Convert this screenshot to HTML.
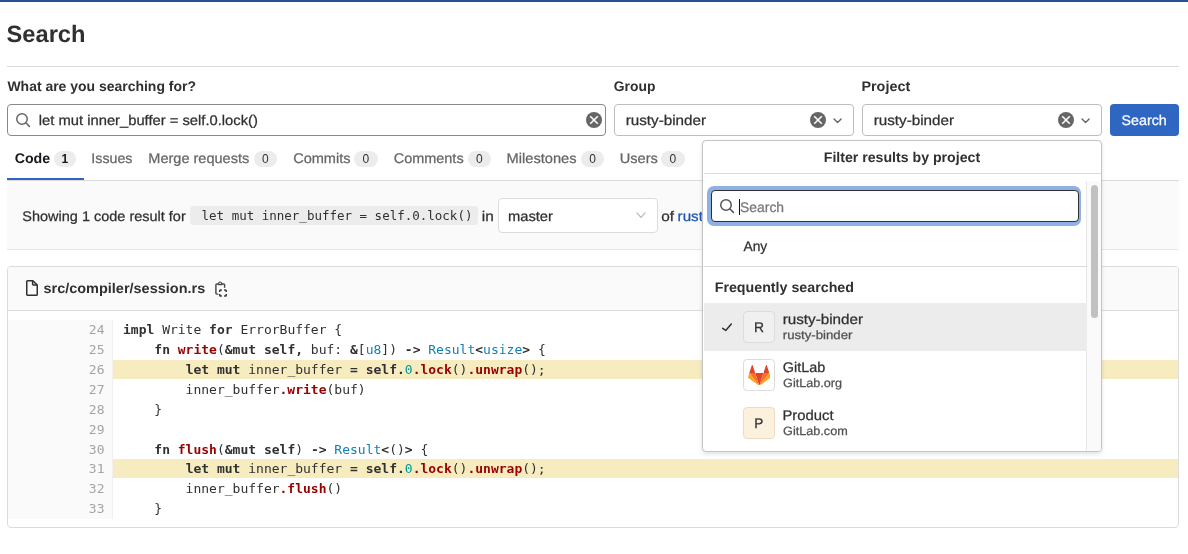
<!DOCTYPE html>
<html lang="en"><head><meta charset="utf-8"><title>Search</title>
<style>
*{box-sizing:border-box;margin:0;padding:0}
html,body{width:1188px;height:554px;overflow:hidden;background:#fff;font-family:'Liberation Sans', sans-serif;color:#303030}
.abs{position:absolute}
.t{position:absolute;white-space:pre;line-height:1em;transform-origin:0 50%;display:block;-webkit-text-stroke:0.25px currentColor;text-rendering:geometricPrecision}
.badge{position:absolute;top:151px;height:16px;border-radius:8px;background:#ececec;color:#303030;font-size:12px;line-height:16px;text-align:center}
.box{position:absolute;border-radius:4px;border:1px solid #bdbdbd;background:#fff}
.ln{position:absolute;left:8px;width:96.5px;text-align:right;font:13px/19.86px 'DejaVu Sans Mono', 'Liberation Mono', monospace;color:#a4a4a4;height:19.86px}
.cl{position:absolute;left:123px;font:13px/19.86px 'DejaVu Sans Mono', 'Liberation Mono', monospace;color:#303030;height:19.86px;white-space:pre}
.hll{position:absolute;left:113px;width:1065px;height:18.7px;background:#f6ecc0}
.k{font-weight:700}
.nf{font-weight:700;color:#900}
.nb{color:#1280b3}
.mi{color:#099}
.row{position:absolute;left:704px;width:382.5px;height:48px}
.av{position:absolute;left:743px;width:32px;height:32px;border-radius:4px;border:1px solid #dcdcde}
#root{position:absolute;left:0;top:0;width:1188px;height:554px;will-change:transform;background:#fff}
</style></head><body><div id="root">
<div class="abs" style="left:0;top:0;width:1188px;height:2px;background:#285294"></div>
<div class="abs" style="left:7px;top:66px;width:1172px;height:1px;background:#dbdbdb"></div>

<!-- search input -->
<div class="box" style="left:7px;top:104px;width:599px;height:32px;border-color:#89888d"></div>
<svg class="abs" style="left:15px;top:112px" width="16" height="16" viewBox="0 0 16 16"><circle cx="7" cy="7" r="5.25" stroke="#666" stroke-width="1.5" fill="none"/><path d="M10.8 10.8L14.4 14.4" stroke="#666" stroke-width="1.5" stroke-linecap="round"/></svg>
<svg class="abs" style="left:586px;top:112px" width="16" height="16" viewBox="0 0 16 16"><circle cx="8" cy="8" r="8" fill="#666"/><path d="M4.2 4.2l7.6 7.6M11.8 4.2l-7.6 7.6" stroke="#fff" stroke-width="1.5" stroke-linecap="butt" fill="none"/></svg>
<!-- group -->
<div class="box" style="left:614px;top:104px;width:240px;height:32px"></div>
<svg class="abs" style="left:810px;top:112px" width="16" height="16" viewBox="0 0 16 16"><circle cx="8" cy="8" r="8" fill="#666"/><path d="M4.2 4.2l7.6 7.6M11.8 4.2l-7.6 7.6" stroke="#fff" stroke-width="1.5" stroke-linecap="butt" fill="none"/></svg>
<svg class="abs" style="left:833.3px;top:118.0px" width="9.1" height="5.6" viewBox="-1 -1 9.1 5.6"><path d="M0 0L3.55 3.6L7.1 0" stroke="#666" stroke-width="1.4" stroke-linecap="round" stroke-linejoin="round" fill="none"/></svg>
<!-- project -->
<div class="box" style="left:862px;top:104px;width:240px;height:32px"></div>
<svg class="abs" style="left:1058px;top:112px" width="16" height="16" viewBox="0 0 16 16"><circle cx="8" cy="8" r="8" fill="#666"/><path d="M4.2 4.2l7.6 7.6M11.8 4.2l-7.6 7.6" stroke="#fff" stroke-width="1.5" stroke-linecap="butt" fill="none"/></svg>
<svg class="abs" style="left:1080.95px;top:118.0px" width="9.1" height="5.6" viewBox="-1 -1 9.1 5.6"><path d="M0 0L3.55 3.6L7.1 0" stroke="#666" stroke-width="1.4" stroke-linecap="round" stroke-linejoin="round" fill="none"/></svg>
<!-- button -->
<div class="abs" style="left:1110px;top:104px;width:69px;height:32px;border-radius:4px;background:#2f66c2"></div>

<!-- tabs -->
<div class="abs" style="left:7px;top:180px;width:1172px;height:1px;background:#dbdbdb"></div>
<div class="abs" style="left:7px;top:178px;width:76.5px;height:2px;background:#2f66c2"></div>
<span class="badge" style="left:54px;width:21.5px;font-weight:700;color:#18171d;">1</span><span class="badge" style="left:254.25px;width:22.25px;">0</span><span class="badge" style="left:354px;width:23.5px;">0</span><span class="badge" style="left:468px;width:22.75px;">0</span><span class="badge" style="left:581.3px;width:22.5px;">0</span><span class="badge" style="left:661.3px;width:23.300000000000068px;">0</span>

<!-- results header -->
<div class="abs" style="left:7px;top:181px;width:1172px;height:69px;background:#fafafa;border-bottom:1px solid #e8e8e8"></div>
<div class="abs" style="left:190px;top:206.2px;width:287.5px;height:18.4px;border-radius:4px;background:#ececec"></div>
<span class="abs" style="left:194px;top:206.5px;font:12.5px/18px 'DejaVu Sans Mono', 'Liberation Mono', monospace;white-space:pre;color:#303030"> let mut inner_buffer = self.0.lock()</span>
<div class="box" style="left:498px;top:198px;width:160px;height:35px;border-color:#dcdcde"></div>
<svg class="abs" style="left:636px;top:212.4px" width="10" height="6.4" viewBox="-1 -1 10 6.4"><path d="M0 0L4.0 4.4L8 0" stroke="#bfbfc3" stroke-width="1.3" stroke-linecap="round" stroke-linejoin="round" fill="none"/></svg>

<!-- file card -->
<div class="abs" style="left:7px;top:266px;width:1172px;height:261.5px;border:1px solid #dbdbdb;border-radius:4px;background:#fff"></div>
<div class="abs" style="left:8px;top:267px;width:1170px;height:44px;background:#fafafa;border-bottom:1px solid #dbdbdb;border-radius:3px 3px 0 0"></div>
<svg class="abs" style="left:24px;top:280px" width="16" height="16" viewBox="0 0 16 16"><path d="M3.6 0.75h5.3l4.35 4.35v9.3a.85.85 0 0 1-.85.85H3.6a.85.85 0 0 1-.85-.85V1.6a.85.85 0 0 1 .85-.85z" stroke="#303030" stroke-width="1.5" fill="none" stroke-linejoin="round"/><path d="M8.6 0.9v3.3a.7.7 0 0 0 .7.7h3.6" stroke="#303030" stroke-width="1.5" fill="none"/></svg>
<svg class="abs" style="left:214px;top:281px" width="14" height="16" viewBox="0 0 14 16"><path d="M4.3 13.1H2.8a.9.9 0 0 1-.9-.9V3.9a.9.9 0 0 1 .9-.9h1.5M7.9 3h1.8a.9.9 0 0 1 .9.9v2.9" stroke="#444" stroke-width="1.4" fill="none"/><path d="M4.7 3.7V2.4a1.4 1.4 0 0 1 2.8 0v1.3z" stroke="#444" stroke-width="1.2" fill="none"/><path d="M5.75 11V9.7a.8.8 0 0 1 .8-.8h1.3M10.1 8.9h1.3a.8.8 0 0 1 .8.8v1.3M12.2 13v1.3a.8.8 0 0 1-.8.8h-1.3M7.85 15.1h-1.3a.8.8 0 0 1-.8-.8v-1.3" stroke="#333" stroke-width="1.5" fill="none"/></svg>
<div class="abs" style="left:8px;top:320px;width:105px;height:198.60px;background:#fafafa;border-right:1px solid #f0f0f0"></div>
<div class="ln" style="top:320.00px">24</div>
<pre class="cl" style="top:320.00px"><span class="k">impl</span> Write <span class="k">for</span> ErrorBuffer {</pre>
<div class="ln" style="top:340.00px">25</div>
<pre class="cl" style="top:340.00px">    <span class="k">fn</span> <span class="nf">write</span>(<span class="k">&amp;mut</span> <span class="k">self</span><span class="k">,</span> buf: <span class="k">&amp;</span>[<span class="nb">u8</span>]) <span class="k">-&gt;</span> <span class="nb">Result</span><span class="k">&lt;</span><span class="nb">usize</span><span class="k">&gt;</span> {</pre>
<div class="hll" style="top:360.20px"></div>
<div class="ln" style="top:360.00px">26</div>
<pre class="cl" style="top:360.00px">        <span class="k">let</span> <span class="k">mut</span> inner_buffer <span class="k">=</span> <span class="k">self</span><span class="k">.</span><span class="mi">0</span><span class="nf">.lock</span>()<span class="nf">.unwrap</span>();</pre>
<div class="ln" style="top:380.00px">27</div>
<pre class="cl" style="top:380.00px">        inner_buffer<span class="nf">.write</span>(buf)</pre>
<div class="ln" style="top:400.00px">28</div>
<pre class="cl" style="top:400.00px">    }</pre>
<div class="ln" style="top:420.00px">29</div>
<pre class="cl" style="top:420.00px"></pre>
<div class="ln" style="top:440.00px">30</div>
<pre class="cl" style="top:440.00px">    <span class="k">fn</span> <span class="nf">flush</span>(<span class="k">&amp;mut</span> <span class="k">self</span>) <span class="k">-&gt;</span> <span class="nb">Result</span><span class="k">&lt;</span>()<span class="k">&gt;</span> {</pre>
<div class="hll" style="top:459.00px"></div>
<div class="ln" style="top:459.00px">31</div>
<pre class="cl" style="top:459.00px">        <span class="k">let</span> <span class="k">mut</span> inner_buffer <span class="k">=</span> <span class="k">self</span><span class="k">.</span><span class="mi">0</span><span class="nf">.lock</span>()<span class="nf">.unwrap</span>();</pre>
<div class="ln" style="top:479.00px">32</div>
<pre class="cl" style="top:479.00px">        inner_buffer<span class="nf">.flush</span>()</pre>
<div class="ln" style="top:498.60px">33</div>
<pre class="cl" style="top:498.60px">    }</pre>

<span id="h1" class="t" style="left:0;top:23.74px;font-size:23.7px;font-weight:700;-webkit-text-stroke:0;color:#303030;transform:translateX(6.57px) scaleX(0.9988);">Search</span>
<span id="l1" class="t" style="left:0;top:79.15px;font-size:14px;font-weight:700;-webkit-text-stroke:0;color:#303030;transform:translateX(7.43px) scaleX(0.9971);">What are you searching for?</span>
<span id="l2" class="t" style="left:0;top:79.15px;font-size:14px;font-weight:700;-webkit-text-stroke:0;color:#303030;transform:translateX(613.83px) scaleX(0.9892);">Group</span>
<span id="l3" class="t" style="left:0;top:79.15px;font-size:14px;font-weight:700;-webkit-text-stroke:0;color:#303030;transform:translateX(861.43px) scaleX(1.0268);">Project</span>
<span id="in1" class="t" style="left:0;top:113.15px;font-size:14px;font-weight:400;color:#303030;transform:translateX(38.81px) scaleX(1.0539);">let mut inner_buffer = self.0.lock()</span>
<span id="g1" class="t" style="left:0;top:113.15px;font-size:14px;font-weight:400;color:#303030;transform:translateX(625.70px) scaleX(1.0867);">rusty-binder</span>
<span id="p1" class="t" style="left:0;top:113.15px;font-size:14px;font-weight:400;color:#303030;transform:translateX(873.70px) scaleX(1.0867);">rusty-binder</span>
<span id="btn" class="t" style="left:0;top:113.15px;font-size:14px;font-weight:400;color:#fff;transform:translateX(1121.59px) scaleX(1.0173);">Search</span>
<span id="tb1" class="t" style="left:0;top:150.65px;font-size:14px;font-weight:700;-webkit-text-stroke:0;color:#18171d;transform:translateX(14.70px) scaleX(1.0139);">Code</span>
<span id="tb2" class="t" style="left:0;top:150.65px;font-size:14px;font-weight:400;color:#666;transform:translateX(91.37px) scaleX(1.0141);">Issues</span>
<span id="tb3" class="t" style="left:0;top:150.65px;font-size:14px;font-weight:400;color:#666;transform:translateX(148.29px) scaleX(1.0374);">Merge requests</span>
<span id="tb4" class="t" style="left:0;top:150.65px;font-size:14px;font-weight:400;color:#666;transform:translateX(293.13px) scaleX(1.0398);">Commits</span>
<span id="tb5" class="t" style="left:0;top:150.65px;font-size:14px;font-weight:400;color:#666;transform:translateX(393.73px) scaleX(1.0326);">Comments</span>
<span id="tb6" class="t" style="left:0;top:150.65px;font-size:14px;font-weight:400;color:#666;transform:translateX(506.57px) scaleX(1.0445);">Milestones</span>
<span id="tb7" class="t" style="left:0;top:150.65px;font-size:14px;font-weight:400;color:#666;transform:translateX(619.73px) scaleX(1.0416);">Users</span>
<span id="r1" class="t" style="left:0;top:208.90px;font-size:14px;font-weight:400;color:#303030;transform:translateX(22.32px) scaleX(1.0343);">Showing 1 code result for</span>
<span id="r2" class="t" style="left:0;top:208.90px;font-size:14px;font-weight:400;color:#303030;transform:translateX(481.78px) scaleX(1.1000);">in</span>
<span id="r3" class="t" style="left:0;top:208.90px;font-size:14px;font-weight:400;color:#303030;transform:translateX(507.95px) scaleX(1.0521);">master</span>
<span id="r4" class="t" style="left:0;top:208.90px;font-size:14px;font-weight:400;color:#303030;transform:translateX(661.14px) scaleX(1.1000);">of</span>
<span id="r5" class="t" style="left:0;top:208.90px;font-size:14px;font-weight:400;color:#1f55b3;transform:translateX(677.57px) scaleX(1.0845);">rusty-binder</span>
<span id="f1" class="t" style="left:0;top:281.15px;font-size:14px;font-weight:700;-webkit-text-stroke:0;color:#303030;transform:translateX(43.45px) scaleX(1.0341);">src/compiler/session.rs</span>
<!-- dropdown panel -->
<div class="abs" style="left:702px;top:140px;width:400px;height:311.5px;border:1px solid #c4c4c4;border-radius:4px;background:#fff;box-shadow:0 2px 4px rgba(0,0,0,.12)"></div>
<div class="abs" style="left:703.5px;top:173px;width:397.5px;height:1px;background:#dbdbdb"></div>
<!-- scroll track -->
<div class="abs" style="left:1086px;top:181px;width:15px;height:269.5px;background:#fafafa;border-left:1px solid #e8e8e8;border-bottom-right-radius:3px"></div>
<div class="abs" style="left:1090.6px;top:185px;width:7.2px;height:133px;border-radius:4px;background:#c1c1c1"></div>
<!-- focus input -->
<div class="abs" style="left:706.8px;top:186.25px;width:374.7px;height:39.25px;border-radius:7px;background:#8fb0e3"></div>
<div class="abs" style="left:710.5px;top:190px;width:368px;height:32px;border-radius:4px;background:#fff;border:1.2px solid #303030"></div>
<svg class="abs" style="left:718.5px;top:198px" width="16" height="16" viewBox="0 0 16 16"><circle cx="7" cy="7" r="5.25" stroke="#555" stroke-width="1.5" fill="none"/><path d="M10.8 10.8L14.4 14.4" stroke="#555" stroke-width="1.5" stroke-linecap="round"/></svg>
<div class="abs" style="left:739px;top:198.7px;width:1px;height:16px;background:#111"></div>
<div class="abs" style="left:703.5px;top:266px;width:383px;height:1px;background:#dbdbdb"></div>
<div class="abs" style="left:703.5px;top:303px;width:383px;height:48px;background:#ececec"></div>
<svg class="abs" style="left:719px;top:320px" width="16" height="16" viewBox="0 0 16 16"><path d="M3.7 8.3L6.7 10.4L12.3 4" stroke="#303030" stroke-width="1.5" fill="none" stroke-linecap="round" stroke-linejoin="round"/></svg>
<div class="av" style="top:311px;background:#f0f0f0"></div>
<div class="av" style="top:359px;background:#fff"></div>
<div class="av" style="top:407px;background:#fcf1df;border-color:#ecdcc4"></div>
<svg class="abs" style="left:747.6px;top:364.6px" width="22.6" height="20.9" viewBox="0 0 210 194">
<path d="M105.0614 193.655l38.64-118.921h-77.28l38.64 118.921z" fill="#e24329"/>
<path d="M105.0614 193.655l-38.64-118.921h-54.153l92.793 118.921z" fill="#fc6d26"/>
<path d="M12.2685 74.7341l-11.742 36.139c-1.071 3.296.102 6.907 2.906 8.944l101.629 73.838-92.793-118.921z" fill="#fca326"/>
<path d="M12.2685 74.7342h54.153l-23.273-71.625c-1.197-3.686-6.411-3.685-7.608 0l-23.272 71.625z" fill="#e24329"/>
<path d="M105.0614 193.655l38.64-118.921h54.153l-92.793 118.921z" fill="#fc6d26"/>
<path d="M197.8544 74.7341l11.742 36.139c1.071 3.296-.102 6.907-2.906 8.944l-101.629 73.838 92.793-118.921z" fill="#fca326"/>
<path d="M197.8544 74.7342h-54.153l23.273-71.625c1.197-3.686 6.411-3.685 7.608 0l23.272 71.625z" fill="#e24329"/>
</svg>

<span id="ph" class="t" style="left:0;top:149.90px;font-size:14px;font-weight:700;-webkit-text-stroke:0;color:#303030;transform:translateX(823.76px) scaleX(1.0099);">Filter results by project</span>
<span id="ps" class="t" style="left:0;top:199.90px;font-size:14px;font-weight:400;color:#777;transform:translateX(740.05px) scaleX(0.9930);">Search</span>
<span id="pa" class="t" style="left:0;top:238.65px;font-size:14px;font-weight:400;color:#303030;transform:translateX(743.45px) scaleX(0.9877);">Any</span>
<span id="pf" class="t" style="left:0;top:279.90px;font-size:14px;font-weight:700;-webkit-text-stroke:0;color:#303030;transform:translateX(714.71px) scaleX(1.0169);">Frequently searched</span>
<span id="a1" class="t" style="left:0;top:319.90px;font-size:14px;font-weight:400;color:#303030;transform:translateX(753.90px) scaleX(0.9885);">R</span>
<span id="n1" class="t" style="left:0;top:311.75px;font-size:14px;font-weight:400;color:#303030;transform:translateX(782.71px) scaleX(1.0867);">rusty-binder</span>
<span id="s1" class="t" style="left:0;top:329.04px;font-size:12px;font-weight:400;color:#525252;transform:translateX(782.74px) scaleX(1.1000);">rusty-binder</span>
<span id="n2" class="t" style="left:0;top:359.90px;font-size:14px;font-weight:400;color:#303030;transform:translateX(782.79px) scaleX(1.0283);">GitLab</span>
<span id="s2" class="t" style="left:0;top:376.59px;font-size:12px;font-weight:400;color:#525252;transform:translateX(783.08px) scaleX(1.0533);">GitLab.org</span>
<span id="a3" class="t" style="left:0;top:415.90px;font-size:14px;font-weight:400;color:#303030;transform:translateX(754.21px) scaleX(0.9710);">P</span>
<span id="n3" class="t" style="left:0;top:408.40px;font-size:14px;font-weight:400;color:#303030;transform:translateX(782.46px) scaleX(1.0590);">Product</span>
<span id="s3" class="t" style="left:0;top:424.59px;font-size:12px;font-weight:400;color:#525252;transform:translateX(783.07px) scaleX(1.0531);">GitLab.com</span>
</div></body></html>
